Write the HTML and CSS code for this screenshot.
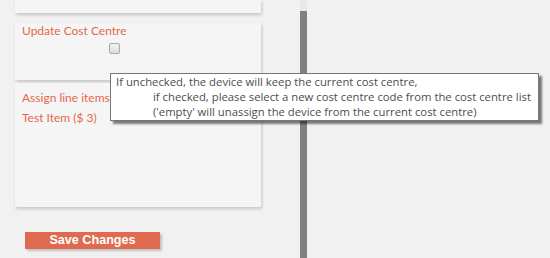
FILE: index.html
```html
<!DOCTYPE html>
<html>
<head>
<meta charset="utf-8">
<link rel="stylesheet" href="styles.css">
</head>
<body>
<div class="page">
  <div class="left">
    <div class="card card-top"></div>
    <div class="card card-cost">
      <div class="label">Update Cost Centre</div>
      <div class="check-row"><input type="checkbox" class="check"></div>
    </div>
    <div class="card card-items">
      <div class="label">Assign line items</div>
      <div class="label item">Test Item ($ 3)</div>
    </div>
    <div class="actions">
      <button class="save">Save Changes</button>
    </div>
  </div>
  <div class="divider">
    <div class="divider-cap"></div>
    <div class="divider-bar"></div>
  </div>
</div>
<div class="tooltip">
  <div>If unchecked, the device will keep the current cost centre,</div>
  <div class="indent">if checked, please select a new cost centre code from the cost centre list</div>
  <div class="indent">('empty' will unassign the device from the current cost centre)</div>
</div>
</body>
</html>
```
FILE: styles.css
```css
html, body {
  margin: 0;
  padding: 0;
  height: 100%;
  background: #f1f1f1;
  overflow: hidden;
}
.page {
  display: flex;
  height: 258px;
  font-family: Lato, "Open Sans", sans-serif;
}
.left {
  margin-left: 15px;
  width: 246px;
  display: flex;
  flex-direction: column;
}
.card {
  background: #f5f5f5;
  box-shadow: 1px 2px 3px rgba(0, 0, 0, 0.18);
  box-sizing: border-box;
}
.card-top {
  height: 13px;
}
.card-cost {
  margin-top: 10px;
  height: 57px;
  padding: 0 7px;
}
.card-items {
  margin-top: 3px;
  height: 124px;
  padding: 7px 7px 0;
}
.label {
  color: #e4684c;
  font-size: 12px;
  line-height: 15px;
}
.item {
  margin-top: 5px;
}
.check-row {
  display: flex;
  padding-left: 87px;
  margin-top: 5px;
}
.check {
  appearance: none;
  -webkit-appearance: none;
  margin: 0;
  width: 11px;
  height: 11px;
  border: 1px solid #a9a9a9;
  border-radius: 2px;
  background: linear-gradient(#f3f3f3, #dcdcdc);
  box-sizing: border-box;
}
.actions {
  margin-top: 25px;
  padding-left: 10px;
  display: flex;
}
.save {
  width: 135px;
  height: 17px;
  border: none;
  padding: 0;
  background: #df6a50;
  color: #fff;
  font-family: "Liberation Sans", Arial, sans-serif;
  font-weight: bold;
  font-size: 12.6px;
  line-height: 17px;
  box-shadow: 2px 2px 2px rgba(0, 0, 0, 0.2);
}
.divider {
  margin-left: 39px;
  width: 7px;
  display: flex;
  flex-direction: column;
}
.divider-cap {
  height: 11px;
  background: #e9e9e9;
}
.divider-bar {
  flex: 1;
  background: #808080;
}
.tooltip {
  position: absolute;
  left: 110px;
  top: 73px;
  width: 429px;
  height: 48px;
  box-sizing: border-box;
  background: #fff;
  border: 1px solid #767676;
  box-shadow: 3px 3px 2px rgba(0, 0, 0, 0.5);
  padding: 0 0 0 5px;
  font-family: "Open Sans", sans-serif;
  font-size: 11.3px;
  line-height: 15px;
  color: #4d4d4d;
  white-space: nowrap;
}
.indent {
  padding-left: 37px;
}
```
